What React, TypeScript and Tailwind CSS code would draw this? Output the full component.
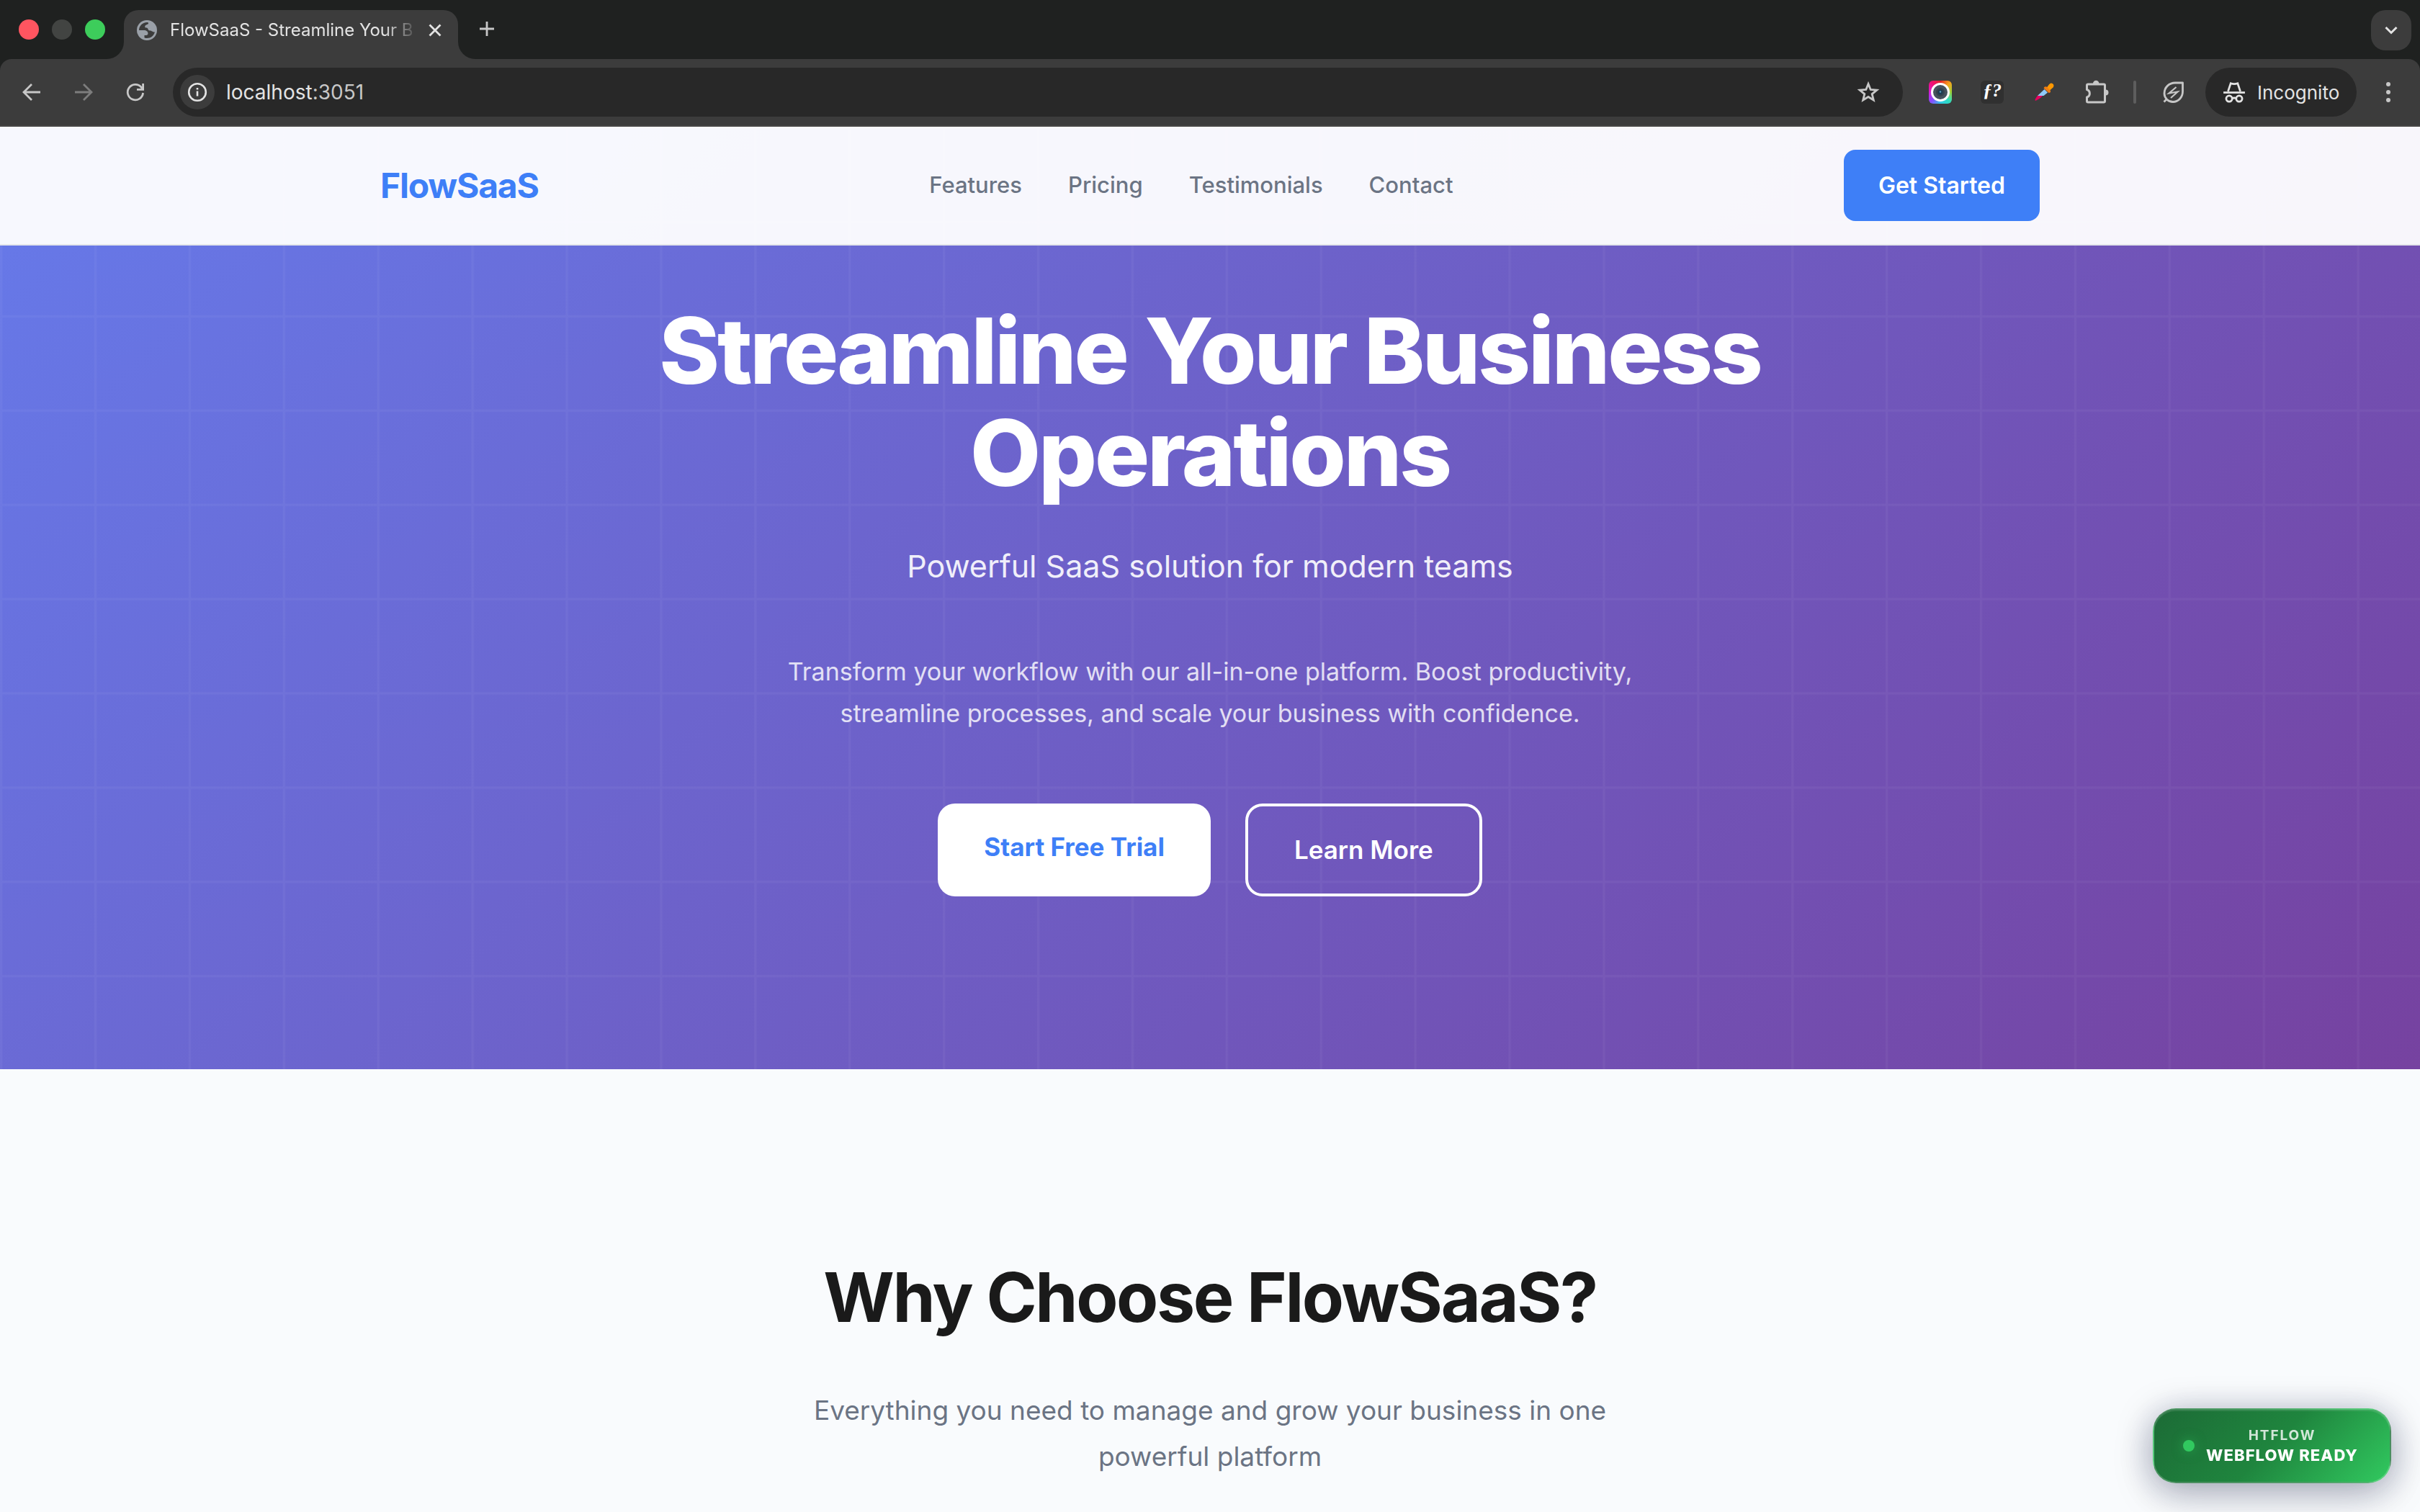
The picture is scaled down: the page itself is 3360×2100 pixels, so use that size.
import React from "react";

const NAV_LINKS = ["Features", "Pricing", "Testimonials", "Contact"];

function GlobeIcon() {
  return (
    <svg viewBox="0 0 28 28" className="size-7 shrink-0" aria-hidden="true">
      <circle cx="14" cy="14" r="14" fill="#9aa0a8" />
      <path d="M3 14C3 8 8 3 14 3c1.500 0 2 .4 2 1.200 0 2-3.500 1.600-4.500 3.800C10.500 10 12 10.500 13.500 10.500c2.500 0 1.500 4 4.500 4s3 2 7 2C23.500 21.500 19.500 25 14 25c-2 0-3.500-.5-3.500-.5V21c2 0 5 .5 5-2.500S13 14 10 14z" fill="#3c3c3c" />
    </svg>
  );
}

function ArrowIcon({ forward = false }: { forward?: boolean }) {
  return (
    <svg viewBox="0 0 28 28" className="size-7" fill="none" stroke="currentColor" strokeWidth="2.8" aria-hidden="true">
      {forward ? <path d="M2 14h22M14 3l11 11-11 11" /> : <path d="M26 14H4M14 3 3 14l11 11" />}
    </svg>
  );
}

function ReloadIcon() {
  return (
    <svg viewBox="0 0 28 28" className="size-7" fill="none" stroke="currentColor" strokeWidth="2.800" aria-hidden="true">
      <path d="M24.600 15A10.700 10.700 0 1 1 22 7l2.500 2.800" />
      <path d="M24.600 2v8.400H16" />
    </svg>
  );
}

function InfoIcon() {
  return (
    <svg viewBox="0 0 28 28" className="size-7" fill="none" stroke="#e3e3e3" strokeWidth="2.600" aria-hidden="true">
      <circle cx="14" cy="14" r="11.800" />
      <path d="M14 12.500v7M14 8v2.600" />
    </svg>
  );
}

function StarIcon() {
  return (
    <svg viewBox="0 0 32 32" className="size-8" fill="none" stroke="#c7c7c7" strokeWidth="2.800" aria-hidden="true">
      <path d="m16 4.500 3.200 8 8.600.6-6.600 5.500 2.100 8.400L16 22.500 8.700 27l2.100-8.400-6.600-5.500 8.600-.6z" />
    </svg>
  );
}

function CameraIcon() {
  return (
    <span className="flex size-8 items-center justify-center rounded-md bg-[conic-gradient(from_0deg,#e8202a,#f5a21c,#9ed43a,#2fdcc0,#2fc8e8,#8a4bff,#d81bd8,#f0107a,#e8202a)]">
      <svg viewBox="0 0 28 28" className="size-7" aria-hidden="true">
        <circle cx="14" cy="14" r="11.500" fill="#46525e" stroke="#fff" strokeWidth="3" />
        <circle cx="14" cy="14" r="6" fill="#36424e" />
        <circle cx="14" cy="14" r="3.500" fill="#1d3c52" />
        <circle cx="14" cy="13.500" r="1.200" fill="#5aa0c0" />
      </svg>
    </span>
  );
}

function DropperIcon() {
  return (
    <svg viewBox="0 0 32 32" className="size-8" aria-hidden="true">
      <path d="M3.500 27c0-1 2.500-5 3.700-6.200l6.800.2c-2 2.500-4 4-6.500 5.200-2 1.200-4 2.300-4 .8z" fill="#e5005f" />
      <path d="m7 21 9.500-9 4.500 4.500-5.500 4.500z" fill="#90caf9" />
      <path d="M19.500 10 23 5.200q2.500-3 5-.9t.8 5L24 13.500z" fill="#ff9800" />
      <path d="M15.500 10.500q1-3 4-2l5.500 5.500q.5 3-2.500 3z" fill="#ef7c14" />
    </svg>
  );
}

function PuzzleIcon() {
  return (
    <svg viewBox="0 0 36 36" className="size-9" aria-hidden="true">
      <path d="M5.500 8.500q0-1.500 1.500-1.500h22q1.500 0 1.500 1.500v22q0 1.500-1.500 1.500H7q-1.500 0-1.500-1.500v-5.500a5.500 5.500 0 0 0 0-10.500z" fill="none" stroke="#c7c7c7" strokeWidth="3" strokeLinejoin="round" />
      <path d="M14 6a4.200 4.200 0 0 1 8.400 0zM31.500 14.500a4 4 0 0 1 0 8z" fill="#c7c7c7" />
    </svg>
  );
}

function LeafIcon() {
  return (
    <svg viewBox="0 0 36 36" className="size-9" fill="none" stroke="#c7c7c7" strokeWidth="2.800" aria-hidden="true">
      <path d="M30.500 5v12c0 8-6 14.500-13.500 14.500A12 12 0 0 1 5 20C5 11 12 5 20 5zM4.500 31.500 9 27" strokeLinejoin="round" />
      <path d="m21.500 11-10 8.500 12-2L14 26" strokeWidth="2.200" />
    </svg>
  );
}

function IncognitoIcon() {
  return (
    <svg viewBox="0 0 30 30" className="size-8" fill="none" stroke="#e3e3e3" strokeWidth="2.600" aria-hidden="true">
      <path d="M1 15.500h28" />
      <path d="m7 14 3.500-10.500q2.200.8 4.500.8t4.500-.8L23 14" />
      <circle cx="8.500" cy="23.500" r="3.900" />
      <circle cx="21.500" cy="23.500" r="3.900" />
      <path d="M12.400 23q2.600-1 5.200 0" />
    </svg>
  );
}

function TabStrip() {
  return (
    <div className="flex h-[82px] bg-[#1f2120] pr-3">
      <div className="flex w-[148px] items-center gap-[18px] pl-[26px]">
        <span className="size-7 rounded-full bg-[#ff5560]" />
        <span className="size-7 rounded-full bg-[#424442]" />
        <span className="size-7 rounded-full bg-[#3dcd5b]" />
      </div>
      <span className="w-6 self-end bg-[#3c3c3c]">
        <span className="block size-6 rounded-br-full bg-[#1f2120]" />
      </span>
      <div className="mt-[14px] flex w-[464px] items-center rounded-t-[20px] bg-[#3c3c3c] pr-4 pl-[18px]">
        <span className="mb-3 flex w-full items-center">
          <GlobeIcon />
          <span className="ml-[18px] text-2xl whitespace-nowrap text-[#e3e3e3] [mask-image:linear-gradient(to_right,black_88%,rgba(0,0,0,0.15))]">
            FlowSaaS - Streamline Your B
          </span>
          <button type="button" aria-label="Close tab" className="ml-auto flex size-8 items-center justify-center">
            <svg viewBox="0 0 20 20" className="size-5" fill="none" stroke="#e3e3e3" strokeWidth="2.800" aria-hidden="true">
              <path d="m2.500 2.500 15 15m0-15-15 15" />
            </svg>
          </button>
        </span>
      </div>
      <span className="w-6 self-end bg-[#3c3c3c]">
        <span className="block size-6 rounded-bl-full bg-[#1f2120]" />
      </span>
      <button type="button" aria-label="New tab" className="mt-6 flex size-8 items-center justify-center">
        <svg viewBox="0 0 24 24" className="size-6" fill="none" stroke="#c7c7c7" strokeWidth="2.800" aria-hidden="true">
          <path d="M12 2v20M2 12h20" />
        </svg>
      </button>
      <button type="button" aria-label="Search tabs" className="mt-[14px] ml-auto flex size-14 items-center justify-center rounded-[20px] bg-[#3c3c3c]">
        <svg viewBox="0 0 20 20" className="size-5" fill="none" stroke="#e3e3e3" strokeWidth="3" aria-hidden="true">
          <path d="m2.500 6 7.500 7.500L17.500 6" />
        </svg>
      </button>
    </div>
  );
}

const TOOL = "flex h-[68px] w-[72px] shrink-0 items-center justify-center";

function Toolbar() {
  return (
    <div className="bg-[#1f2120]">
      <div className="flex h-[94px] items-center rounded-t-2xl border-b-2 border-[#474645] bg-[#3c3c3c] px-2 text-[#c7c7c7]">
        <button type="button" aria-label="Back" className={TOOL}><ArrowIcon /></button>
        <button type="button" aria-label="Forward" className={`${TOOL} text-[#7d7d7d]`}><ArrowIcon forward /></button>
        <button type="button" aria-label="Reload" className={TOOL}><ReloadIcon /></button>
        <div className="mx-4 flex h-[68px] flex-1 items-center rounded-full bg-[#282828] pr-8 pl-[10px]">
          <button type="button" aria-label="Site information" className="flex size-12 items-center justify-center rounded-full bg-[#3c3c3c]"><InfoIcon /></button>
          <span className="ml-4 flex-1 text-[28px] text-[#e3e3e3]">localhost<span className="text-[#c7c7c7]">:3051</span></span>
          <button type="button" aria-label="Bookmark this tab"><StarIcon /></button>
        </div>
        <button type="button" aria-label="Screen capture extension" className={TOOL}><CameraIcon /></button>
        <button type="button" aria-label="Font finder extension" className={TOOL}>
          <span className="flex size-8 items-center justify-center rounded-md bg-[#303030] pb-1 font-['Liberation_Serif',serif] text-[26px] leading-none font-bold text-white italic">ƒ?</span>
        </button>
        <button type="button" aria-label="Colour picker extension" className={TOOL}><DropperIcon /></button>
        <button type="button" aria-label="Extensions" className={TOOL}><PuzzleIcon /></button>
        <span className="mx-4 h-8 w-1 rounded-full bg-[#5e5e5e]" />
        <button type="button" aria-label="Energy saver" className={TOOL}><LeafIcon /></button>
        <button type="button" className="mx-2 flex h-[68px] w-[210px] items-center gap-4 rounded-full bg-[#282828] pl-6 text-[26px] text-[#e3e3e3]">
          <IncognitoIcon />
          Incognito
        </button>
        <button type="button" aria-label="Menu" className={TOOL}>
          <svg viewBox="0 0 8 28" className="h-7 w-2" fill="#c7c7c7" aria-hidden="true">
            <circle cx="4" cy="3" r="3" />
            <circle cx="4" cy="14" r="3" />
            <circle cx="4" cy="25" r="3" />
          </svg>
        </button>
      </div>
    </div>
  );
}

function Header() {
  return (
    <header className="relative z-10 border-b-2 border-[#e5e7eb] bg-white/95">
      <div className="mx-auto flex h-[163px] max-w-[2400px] items-center justify-between px-12">
        <a href="#top" className="text-5xl font-bold tracking-tight text-[#3e7ff7]">FlowSaaS</a>
        <nav className="flex gap-16 text-[31px] font-medium text-[#6b7484]">
          {NAV_LINKS.map((label) => (
            <a key={label} href={`#${label.toLowerCase()}`}>{label}</a>
          ))}
        </nav>
        <a href="#start" className="rounded-2xl bg-[#3e7ff7] px-12 py-6 text-[32px] leading-[51px] font-semibold text-white">Get Started</a>
      </div>
    </header>
  );
}

function Hero() {
  return (
    <section id="top" className="relative -mt-[165px] overflow-hidden bg-[linear-gradient(135deg,#667aea,#7642a0)] pt-60 pb-60 text-center text-white">
      <svg viewBox="0 0 100 100" preserveAspectRatio="xMinYMin meet" className="absolute inset-0 size-full overflow-visible" aria-hidden="true">
        <defs>
          <pattern id="grid" width="10" height="10" patternUnits="userSpaceOnUse">
            <path d="M10 0H0V10" fill="none" stroke="#fff" strokeOpacity="0.04" strokeWidth="0.5" />
          </pattern>
        </defs>
        <rect width="1000" height="100" fill="url(#grid)" />
      </svg>
      <div className="relative mx-auto max-w-[1600px]">
        <h1 className="text-[127px] leading-[142px] font-extrabold tracking-tight">Streamline Your Business Operations</h1>
        <p className="mt-12 text-[43px] leading-[76px] text-white/90">Powerful SaaS solution for modern teams</p>
        <p className="mx-auto mt-20 max-w-[1200px] text-[34px] leading-[58px] text-white/80">
          Transform your workflow with our all-in-one platform. Boost productivity, streamline processes, and scale your business with confidence.
        </p>
        <div className="mt-24 flex justify-center gap-12 text-[35px] leading-[57px]">
          <a href="#start" className="rounded-3xl bg-white px-16 py-8 font-bold text-[#3e7ff7]">Start Free Trial</a>
          <a href="#features" className="rounded-3xl border-4 border-white px-16 py-8 font-semibold">Learn More</a>
        </div>
      </div>
    </section>
  );
}

function Features() {
  return (
    <section id="features" className="flex-1 pt-60 text-center">
      <h2 className="text-[95px] leading-[154px] font-bold tracking-tight text-[#1a1a1a]">Why Choose FlowSaaS?</h2>
      <p className="mx-auto mt-12 max-w-[1200px] text-[37px] leading-[64px] text-[#6b7484]">
        Everything you need to manage and grow your business in one powerful platform
      </p>
    </section>
  );
}

function ReadyBadge() {
  return (
    <aside className="fixed right-10 bottom-10 z-20 flex h-[104px] w-[331px] items-center gap-4 rounded-[32px] border-2 border-white/20 bg-[linear-gradient(135deg,#1c6b36_0%,#1f853e_50%,#31c95f_100%)] pl-10 text-white shadow-[0_16px_64px_rgba(0,0,0,0.12),0_8px_48px_rgba(30,41,90,0.35),inset_0_2px_0_rgba(255,255,255,0.1)]">
      <span className="size-4 shrink-0 rounded-full bg-[#31c95f] shadow-[0_0_16px_rgba(49,201,95,0.5)]" />
      <span className="flex flex-col items-center whitespace-nowrap">
        <span className="text-[19px] leading-[26px] font-bold tracking-widest text-white/80">HTFLOW</span>
        <span className="text-[22px] leading-[28px] font-extrabold tracking-wider">WEBFLOW READY</span>
      </span>
    </aside>
  );
}

export default function App() {
  return (
    <div className="flex min-h-screen flex-col overflow-hidden bg-[#f9fbfd] font-['Inter',sans-serif]">
      <TabStrip />
      <Toolbar />
      <Header />
      <Hero />
      <Features />
      <ReadyBadge />
    </div>
  );
}
